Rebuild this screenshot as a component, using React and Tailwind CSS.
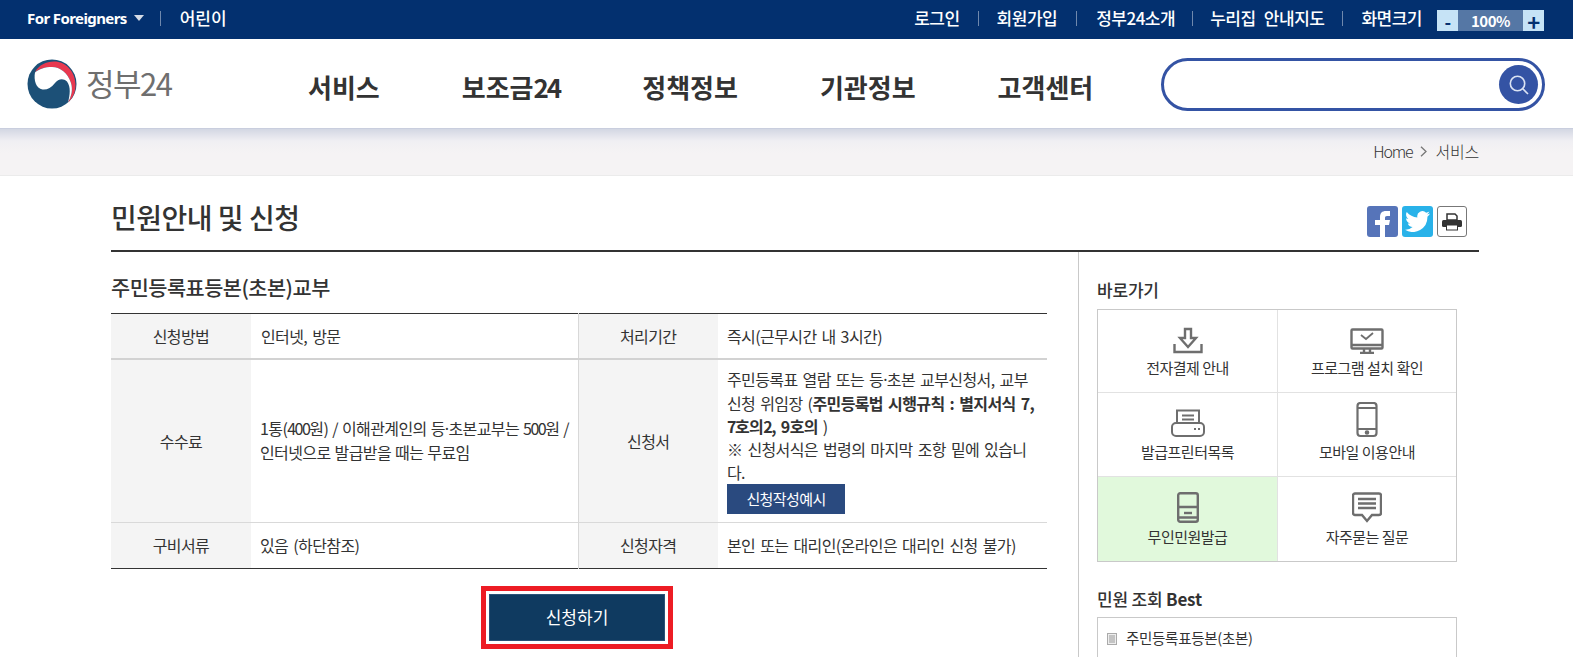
const FONT = "font-['Noto_Sans_CJK_KR','Noto_Sans',sans-serif]";

const Sep = () => <span className="block w-px h-[15px] bg-[#6f88ad]" />;

const Logo = () => (
  <svg width="50" height="50" viewBox="0 0 50 50">
    <circle cx="25" cy="25" r="24.5" fill="#1c5077" />
    <path d="M8 13C12 6 19 2.500 27 2.500 39 2.500 48.500 13 48.500 26 48.500 33 46 39 41 43.500 44.500 37 46 31 44 24 41 14 33 8 25 8 18 8 12 10 8 13Z" fill="#e8384f" />
    <path d="M8 13.500C12 10 18 8 25 8 33 8 41 14 44 24 46 31 44.500 37 41 43.500 43 36 44 28 40 22.500 36 18.500 31 20 28 24 24 29 20 31 15.500 30.500 9 29.500 6.500 21 8 13.500Z" fill="#fff" />
  </svg>
);

const TopBar = () => (
  <div className="h-[39px] bg-[#03306f] flex items-center justify-between text-white text-[17px] pl-[27px] pr-[29px]">
    <div className="flex items-center mb-[3px]">
      <span className="font-bold font-['Noto_Sans',sans-serif] tracking-[-0.6px] text-[15px]">For Foreigners</span>
      <span className="ml-[7px] w-0 h-0 border-x-[5px] border-x-transparent border-t-[6px] border-t-[#d5dbe6]" />
      <span className="ml-[16px] mr-[19px]"><Sep /></span>
      <span className="font-medium">어린이</span>
    </div>
    <div className="flex items-center font-medium tracking-[-0.5px]">
      <div className="flex items-center mb-[3px] [word-spacing:5px]">
        <span>로그인</span>
        <span className="mx-[18px]"><Sep /></span>
        <span>회원가입</span>
        <span className="mx-[19px]"><Sep /></span>
        <span>정부24소개</span>
        <span className="mx-[17px]"><Sep /></span>
        <span>누리집 안내지도</span>
        <span className="mx-[18px]"><Sep /></span>
        <span>화면크기</span>
      </div>
      <div className="ml-[15px] mt-[2px] flex h-[21px] items-center font-bold text-[15px] leading-none">
        <span className="w-[21px] h-full bg-[#c6e3f6] text-[#03306f] flex items-center justify-center text-[18px]">-</span>
        <span className="w-[65px] h-full bg-[#5577a5] flex items-center justify-center">100%</span>
        <span className="w-[21px] h-full bg-[#c6e3f6] text-[#03306f] flex items-center justify-center text-[22px]">+</span>
      </div>
    </div>
  </div>
);

const Header = () => (
  <div className="h-[90px] bg-white flex items-center relative z-10 border-b border-[#c9cede] pr-[28px]">
    <div className="w-[308px] pl-[27px] flex items-center shrink-0">
      <Logo />
      <span className="ml-[9px] mb-[3px] text-[31px] text-[#6f6f6f] tracking-[-1.5px] leading-none">정부24</span>
    </div>
    <nav className="flex items-center gap-[82px] mt-[5px] text-[#333] text-[26px] font-bold">
      <span>서비스</span>
      <span>보조금<span className="tracking-[-2px]">24</span></span>
      <span>정책정보</span>
      <span>기관정보</span>
      <span>고객센터</span>
    </nav>
    <div className="ml-auto mt-[2px] w-[384px] h-[53px] border-[3px] border-[#3453a4] rounded-full flex items-center justify-end pr-[4px]">
      <span className="w-[39px] h-[39px] rounded-full bg-[#3453a4] flex items-center justify-center">
        <svg width="22" height="22" viewBox="0 0 22 22" fill="none" stroke="#dbe3f3" strokeWidth="1.6">
          <circle cx="9.5" cy="9.5" r="7.2" />
          <path d="M14.8 14.8 20 20" />
        </svg>
      </span>
    </div>
  </div>
);

const Breadcrumb = () => (
  <div className="h-[47px] pb-[2px] bg-[linear-gradient(#d3d7e3_0px,#f0eff3_12px,#f5f3f4_24px)] border-b border-[#ebebeb] flex items-center justify-end pr-[94px] text-[16px] text-[#333] font-light">
    <span className="tracking-[-1.2px]">Home</span>
    <svg className="mx-[8px]" width="7" height="11" viewBox="0 0 7 11" fill="none" stroke="#777" strokeWidth="1.3"><path d="M1 .7 6 5.5 1 10.3" /></svg>
    <span className="tracking-[-0.2px]">서비스</span>
  </div>
);

const Th = ({ children, first }) => (
  <th className={`bg-[#f4f4f4] font-normal text-center text-[#333] ${first ? "" : "border-l border-[#d8d8d8]"}`}>{children}</th>
);

// digits in the reference run much tighter than the hangul around them
const Num = ({ children }) => <span className="tracking-[-1.5px]">{children}</span>;
const Dot = () => <span className="font-['Noto_Sans',sans-serif]">·</span>;

const InfoTable = () => (
  <table className="w-[936px] table-fixed border-collapse border-t border-b border-[#333] text-[16px] text-[#333] tracking-[-0.6px] [word-spacing:2px]">
    <colgroup>
      <col className="w-[140px]" />
      <col className="w-[327px]" />
      <col className="w-[140px]" />
      <col />
    </colgroup>
    <tbody>
      <tr className="h-[45px] border-b-2 border-[#d2d2d2]">
        <Th first>신청방법</Th>
        <td className="pl-[10px]">인터넷, 방문</td>
        <Th>처리기간</Th>
        <td className="pl-[9px]">즉시(근무시간 내 3시간)</td>
      </tr>
      <tr className="h-[163px] border-b border-[#d9d9d9]">
        <Th first>수수료</Th>
        <td className="pl-[9px] leading-[23px] [word-spacing:1px]">
          1통(<Num>400</Num>원) / 이해관계인의 등<Dot />초본교부는 <Num>500</Num>원 / 인터넷으로 발급받을 때는 무료임
        </td>
        <Th>신청서</Th>
        <td className="pl-[9px] pr-[10px] pt-[8px] pb-[8px] leading-[23px]">
          주민등록표 열람 또는 등<Dot />초본 교부신청서, 교부 신청 위임장 (<b className="font-bold">주민등록법 시행규칙 : 별지서식 7, <Num>7</Num>호의<Num>2</Num>, 9호의</b> )
          <br />
          ※ 신청서식은 법령의 마지막 조항 밑에 있습니다.
          <span className="flex w-[118px] h-[30px] bg-[#2a4a7f] text-white items-center justify-center text-[15px]">신청작성예시</span>
        </td>
      </tr>
      <tr className="h-[46px]">
        <Th first>구비서류</Th>
        <td className="pl-[9px]">있음 (하단참조)</td>
        <Th>신청자격</Th>
        <td className="pl-[9px]">본인 또는 대리인(온라인은 대리인 신청 불가)</td>
      </tr>
    </tbody>
  </table>
);

const IconDownload = () => (
  <svg width="30" height="27" viewBox="0 0 30 27" fill="none" stroke="#6e6e6e" strokeWidth="2.4">
    <path d="M1.5 17v8h27v-8" />
    <path d="M12 2h6v9h5l-8 9-8-9h5z" />
  </svg>
);
const IconMonitor = () => (
  <svg width="34" height="26" viewBox="0 0 34 26" fill="none" stroke="#6e6e6e" strokeWidth="2.4">
    <rect x="1.5" y="1.5" width="31" height="19" rx="1" />
    <path d="M1 17h32M10 25h14M14 21v4M20 21v4" />
    <path d="m11 7 5 4 7-6" strokeWidth="1.8" />
  </svg>
);
const IconPrinter = () => (
  <svg width="34" height="29" viewBox="0 0 34 29" fill="none" stroke="#6e6e6e" strokeWidth="2">
    <path d="M6 14V1.500h22V14" />
    <rect x="1" y="14" width="32" height="13" rx="4" />
    <path d="M11 6.500h12M11 10.500h12" />
    <path d="M23 20h2M27 20h2" />
  </svg>
);
const IconPhone = () => (
  <svg width="22" height="36" viewBox="0 0 22 36" fill="none" stroke="#6e6e6e" strokeWidth="2.2">
    <rect x="1.500" y="1" width="19" height="33" rx="3" />
    <path d="M1.500 6h19M1.500 27h19" />
    <circle cx="11" cy="30.500" r="1.200" fill="#6e6e6e" />
  </svg>
);
const IconKiosk = () => (
  <svg width="22" height="31" viewBox="0 0 22 31" fill="none" stroke="#6e6e6e" strokeWidth="2.4">
    <rect x="1.200" y="1.200" width="19.600" height="28.600" rx="2" />
    <path d="M1 15h20M1 25.500h20" />
    <path d="M7 21h8" />
  </svg>
);
const IconChat = () => (
  <svg width="30" height="31" viewBox="0 0 30 31" fill="none" stroke="#6e6e6e" strokeWidth="2.4">
    <path d="M3 1.500h24a2 2 0 0 1 2 2V21a2 2 0 0 1-2 2h-7l-5 6-5-6H3a2 2 0 0 1-2-2V3.500a2 2 0 0 1 2-2Z" />
    <path d="M6 7h18M6 11.500h18M6 16h18" />
  </svg>
);

const quick = [
  { label: "전자결제 안내", icon: <IconDownload />, h: "h-[83px]" },
  { label: "프로그램 설치 확인", icon: <IconMonitor />, h: "h-[83px]" },
  { label: "발급프린터목록", icon: <IconPrinter />, h: "h-[84px]" },
  { label: "모바일 이용안내", icon: <IconPhone />, h: "h-[84px]" },
  { label: "무인민원발급", icon: <IconKiosk />, h: "h-[84px]", active: true },
  { label: "자주묻는 질문", icon: <IconChat />, h: "h-[84px]" },
];

const Sidebar = () => (
  <aside className="flex-1 border-l border-[#c9c9c9] pl-[18px] pt-[26px] h-[406px] overflow-hidden">
    <h3 className="text-[17px] leading-[24px] font-medium text-[#333] tracking-[-0.2px]">바로가기</h3>
    <div className="mt-[7px] w-[360px] border border-[#c9c9c9] grid grid-cols-[180px_1fr]">
      {quick.map((q, i) => (
        <div
          key={q.label}
          className={`${q.h} flex flex-col items-center justify-end pb-[14px] text-[15px] text-[#333] tracking-[-0.5px] ${i % 2 === 0 ? "border-r border-[#e2e2e2]" : ""} ${i < 4 ? "border-b border-[#e2e2e2]" : ""} ${q.active ? "bg-[#e1f9dc]" : ""}`}
        >
          {q.icon}
          <span className="mt-[4px] leading-[20px]">{q.label}</span>
        </div>
      ))}
    </div>
    <h3 className="mt-[25px] text-[17px] leading-[24px] font-medium text-[#333] tracking-[-0.2px]">
      민원 조회 <b className="font-bold">Best</b>
    </h3>
    <div className="mt-[6px] w-[360px] h-[80px] border border-[#c9c9c9] pl-[9px] pt-[10px] flex items-start text-[14.5px] text-[#333] tracking-[-0.3px]">
      <svg className="mt-[5px]" width="10" height="12" viewBox="0 0 10 12">
        <rect x=".5" y=".5" width="9" height="11" fill="#eee" stroke="#aaa" />
        <path d="M2 3h6M2 5h6M2 7h6M2 9h6" stroke="#999" />
      </svg>
      <span className="ml-[9px] leading-[20px]">주민등록표등본(초본)</span>
    </div>
  </aside>
);

export default function App() {
  return (
    <div className={`${FONT} w-full h-[657px] overflow-hidden bg-white`}>
      <TopBar />
      <Header />
      <Breadcrumb />
      <div className="w-[1368px] ml-[111px]">
        <div className="h-[76px] border-b-2 border-[#333] flex items-end justify-between pb-[10px]">
          <h2 className="mb-[3px] text-[28px] font-medium text-[#333] tracking-[-0.5px] leading-[40px]">민원안내 및 신청</h2>
          <div className="flex items-center gap-[4px] mr-[12px] mb-[3px]">
            <span className="w-[31px] h-[31px] rounded-[3px] bg-[#5674b9] flex items-end justify-center overflow-hidden">
              <svg width="18" height="27" viewBox="0 0 18 27" fill="#fff"><path d="M6 27V15H1v-5h5V7c0-4 2-6 6-6h4v5h-3c-1.500 0-2 .7-2 2v2h5l-1 5h-4v12z" /></svg>
            </span>
            <span className="w-[31px] h-[31px] rounded-[3px] bg-[#29b2e9] flex items-center justify-center">
              <svg width="25" height="21" viewBox="0 0 24 20" fill="#fff"><path d="M24 2.400c-.9.4-1.800.7-2.800.8 1-.6 1.800-1.600 2.200-2.700-1 .6-2 1-3.100 1.200A4.900 4.900 0 0 0 11.900 6.100C7.800 5.900 4.200 3.900 1.700.9.400 3.100 1 6 3.200 7.500c-.8 0-1.600-.2-2.200-.6 0 2.400 1.700 4.400 3.900 4.900-.7.200-1.500.2-2.200.1.600 2 2.400 3.400 4.600 3.400A9.900 9.900 0 0 1 0 17.800 14 14 0 0 0 21.500 5.400c1-.7 1.800-1.600 2.500-3Z" /></svg>
            </span>
            <span className="w-[30px] h-[31px] rounded-[3px] border border-[#777] flex items-center justify-center">
              <svg width="20" height="18" viewBox="0 0 20 18" fill="#333"><path d="M5 1h8l2 2v4H5z" fill="none" stroke="#333" strokeWidth="1.500" /><rect x="0" y="7" width="20" height="7" rx="1.500" /><rect x="4.500" y="12" width="11" height="5" fill="#fff" stroke="#333" /></svg>
            </span>
          </div>
        </div>
        <div className="flex">
          <div className="w-[967px] shrink-0">
            <h3 className="pt-[20px] text-[20.800px] leading-[30px] font-medium text-[#333] tracking-[-0.5px]">주민등록표등본(초본)교부</h3>
            <div className="mt-[11px]">
              <InfoTable />
            </div>
            <div className="w-[936px] flex justify-center pr-[4px] mt-[17px]">
              <div className="border-[5px] border-[#ed1c24] p-[3px]">
                <button className="w-[176px] h-[47px] bg-[#0f3a60] text-white text-[17px] border border-[#2b5277]">신청하기</button>
              </div>
            </div>
          </div>
          <Sidebar />
        </div>
      </div>
    </div>
  );
}
